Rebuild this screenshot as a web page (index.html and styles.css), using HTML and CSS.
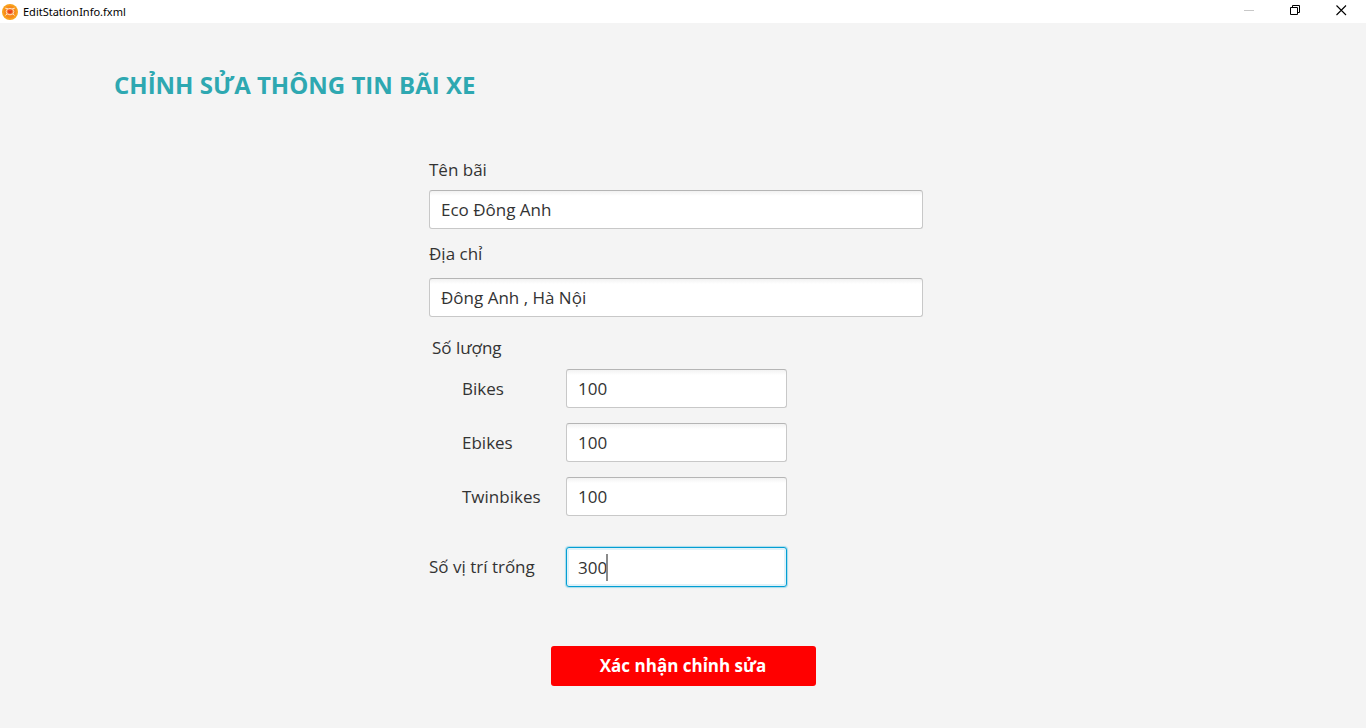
FILE: index.html
```html
<!DOCTYPE html>
<html lang="vi">
<head>
<meta charset="utf-8">
<meta name="viewport" content="width=device-width, initial-scale=1">
<title>EditStationInfo.fxml</title>
<link rel="stylesheet" href="styles.css">
</head>
<body>
<header class="titlebar">
  <svg class="app-icon" viewBox="0 0 16 16" aria-hidden="true">
    <circle cx="8" cy="8" r="8" fill="#f9a11b"/>
    <circle cx="8" cy="8" r="6.200" fill="#f78a1c"/>
    <path d="M3.200 4.200 5.800 4.600M12.800 4.200 10.400 4.600M3.400 11.400 5 10M12.600 11.400 11 10" stroke="#ffe9cc" stroke-width="1"/>
    <ellipse cx="8" cy="7.600" rx="3.800" ry="3.200" fill="#f37a35" stroke="#ffe9cc" stroke-width=".9"/>
    <path d="M6 6 8 6.800 10 6 9.700 8.800 8 9.600 6.300 8.800Z" fill="#ea3f1c"/>
  </svg>
  <span class="app-name">EditStationInfo.fxml</span>
  <div class="window-controls">
    <button class="window-button" type="button" aria-label="Minimize" disabled>
      <svg class="window-icon" viewBox="0 0 11 11"><path d="M0 5.500H10" stroke="#c8c8c8"/></svg>
    </button>
    <button class="window-button" type="button" aria-label="Restore">
      <svg class="window-icon" viewBox="0 0 11 11"><path d="M.5 2.500H7.500V9.500H.5ZM2.500 2.500V.5H9.500V7.500H7.500" fill="none" stroke="#000"/></svg>
    </button>
    <button class="window-button" type="button" aria-label="Close">
      <svg class="window-icon" viewBox="0 0 11 11"><path d="M.5.5 10 10M10 .5.5 10" stroke="#000" stroke-width="1.100"/></svg>
    </button>
  </div>
</header>
<main class="page">
  <h1 class="heading">CHỈNH SỬA THÔNG TIN BÃI XE</h1>
  <form class="form">
    <label class="label" for="name">Tên bãi</label>
    <input class="input name" id="name" type="text" value="Eco Đông Anh">
    <label class="label" for="address">Địa chỉ</label>
    <input class="input address" id="address" type="text" value="Đông Anh , Hà Nội">
    <fieldset class="counts">
      <legend class="label legend">Số lượng</legend>
      <div class="row">
        <label class="label nested" for="bikes">Bikes</label>
        <input class="input" id="bikes" type="text" value="100">
      </div>
      <div class="row">
        <label class="label nested" for="ebikes">Ebikes</label>
        <input class="input" id="ebikes" type="text" value="100">
      </div>
      <div class="row">
        <label class="label nested" for="twinbikes">Twinbikes</label>
        <input class="input" id="twinbikes" type="text" value="100">
      </div>
    </fieldset>
    <div class="row free">
      <label class="label" for="free">Số vị trí trống</label>
      <div class="focus-field">
        <input class="input focused" id="free" type="text" value="300">
        <span class="caret"></span>
      </div>
    </div>
    <button class="submit" type="button">Xác nhận chỉnh sửa</button>
  </form>
</main>
</body>
</html>
```
FILE: styles.css
```css
* {
  box-sizing: border-box;
}

body {
  margin: 0;
  min-height: 100vh;
  background: #f4f4f4;
  color: #333;
  font-family: "Open Sans", "Noto Sans", sans-serif;
  font-size: 17px;
  line-height: 24px;
}

.titlebar {
  display: flex;
  align-items: center;
  height: 23px;
  padding: 0 2px;
  background: #fff;
  color: #000;
  font-family: "Noto Sans", "Open Sans", sans-serif;
  font-size: 11px;
}

.app-icon {
  width: 16px;
  height: 16px;
  margin-right: 5px;
}

.window-controls {
  display: flex;
  align-self: stretch;
  margin-left: auto;
}

.window-button {
  display: grid;
  place-items: center;
  width: 46px;
  padding: 0 0 3px;
  border: 0;
  background: none;
}

.window-icon {
  width: 11px;
  height: 11px;
}

.page {
  padding: 46px 114px 40px;
}

.heading {
  margin: 0 0 57px;
  color: #2ea8b1;
  font-size: 24px;
  font-weight: 700;
  line-height: 32px;
}

.form {
  display: flex;
  flex-direction: column;
  align-items: flex-start;
  width: 100%;
  max-width: 508px;
  margin: 0 auto;
}

.label {
  display: block;
}

.input {
  width: 100%;
  height: 39px;
  padding: 0 11px;
  border: 1px solid #c8c8c8;
  border-top-color: #b5b5b5;
  border-radius: 3px;
  background: linear-gradient(#f2f2f2, #fff 5px);
  color: #333;
  font: inherit;
}

.name,
.address {
  max-width: 494px;
}

.name {
  margin: 8px 0 13px;
}

.address {
  margin: 12px 0 19px;
}

.counts {
  display: flex;
  flex-direction: column;
  gap: 15px;
  width: 100%;
  margin: 0;
  padding: 0;
  border: 0;
}

.legend {
  margin-bottom: 9px;
  padding: 0 0 0 3px;
}

.row {
  display: grid;
  grid-template-columns: 137px minmax(0, 221px);
  align-items: center;
  width: 100%;
}

.nested {
  padding-left: 33px;
}

.free {
  margin: 31px 0 59px;
}

.focus-field {
  position: relative;
}

.focused {
  display: block;
  height: 40px;
  border: 1px solid #039ed3;
  background: #fff;
  box-shadow: 0 0 1px 1px #a9dcec, inset 0 0 0 2px #e0f2f9;
  caret-color: transparent;
  outline: 0;
}

.caret {
  position: absolute;
  top: 7px;
  left: 40px;
  width: 2px;
  height: 27px;
  background: #8a8a8a;
}

.submit {
  align-self: center;
  width: 265px;
  height: 40px;
  padding: 0;
  border: 0;
  border-radius: 3px;
  background: #f00;
  color: #fff;
  font: inherit;
  font-weight: 700;
}
```
